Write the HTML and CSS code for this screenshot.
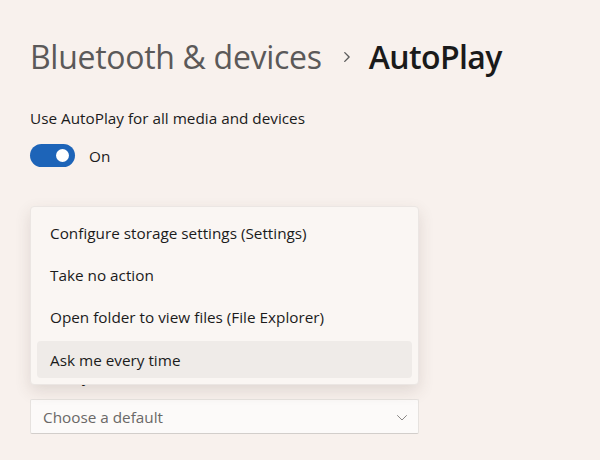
FILE: index.html
```html
<!DOCTYPE html>
<html lang="en">
<head>
    <meta charset="UTF-8">
    <title>AutoPlay</title>
    <link rel="stylesheet" href="styles.css">
</head>
<body>
    <div class="page">
        <h1 class="breadcrumb">
            <span class="crumb-parent">Bluetooth &amp; devices</span>
            <svg class="crumb-sep" viewBox="0 0 10 16" width="9" height="14" aria-hidden="true">
                <path d="M3 3l5 5-5 5" fill="none" stroke="#5c5c5c" stroke-width="1.6" stroke-linecap="round" stroke-linejoin="round"/>
            </svg>
            <span class="crumb-current">AutoPlay</span>
        </h1>

        <div class="setting-label">Use AutoPlay for all media and devices</div>
        <div class="toggle-row">
            <div class="toggle"><div class="knob"></div></div>
            <span class="toggle-text">On</span>
        </div>

        <div class="section">
            <div class="setting-label">Memory card</div>
            <div class="select">
                <span>Choose a default</span>
                <svg class="select-chevron" viewBox="0 0 12 8" width="12" height="8" aria-hidden="true">
                    <path d="M1.5 2.5l4.5 4.5 4.5-4.5" fill="none" stroke="#8a8786" stroke-width="1" stroke-linecap="round" stroke-linejoin="round"/>
                </svg>
            </div>
        </div>

        <div class="menu">
            <div class="menu-item">Configure storage settings (Settings)</div>
            <div class="menu-item">Take no action</div>
            <div class="menu-item">Open folder to view files (File Explorer)</div>
            <div class="menu-item selected">Ask me every time</div>
        </div>
    </div>
</body>
</html>
```

FILE: styles.css
```css
body {
    margin: 0;
    padding: 0;
    background-color: #f8f1ed;
    font-family: 'Open Sans', 'Noto Sans', sans-serif;
    color: #1b1b1b;
}
.page {
    position: relative;
    width: 600px;
    height: 460px;
    padding: 0 0 0 30px;
    box-sizing: border-box;
}
.breadcrumb {
    margin: 0;
    padding-top: 33px;
    height: 46px;
    display: flex;
    align-items: center;
    font-size: 32px;
    font-weight: 400;
    letter-spacing: -0.3px;
}
.crumb-parent {
    color: #5b5959;
}
.crumb-sep {
    margin: 2px 18px 0 20px;
}
.crumb-current {
    color: #1a1a1a;
    font-weight: 600;
    letter-spacing: -0.6px;
}
.setting-label {
    font-size: 15.3px;
    line-height: 20px;
    color: #1b1b1b;
}
.breadcrumb + .setting-label {
    margin-top: 29px;
}
.toggle-row {
    display: flex;
    align-items: center;
    margin-top: 16px;
    height: 23px;
}
.toggle {
    width: 45px;
    height: 23px;
    border-radius: 12px;
    background-color: #1d64b8;
    display: flex;
    align-items: center;
    justify-content: flex-end;
    padding-right: 6px;
    box-sizing: border-box;
}
.knob {
    width: 13px;
    height: 13px;
    border-radius: 50%;
    background-color: #fff;
}
.toggle-text {
    margin-left: 14px;
    font-size: 15.3px;
}
.section {
    margin-top: 199px;
    width: 389px;
}
.section .setting-label {
    margin-bottom: 13px;
}
.select {
    height: 35px;
    box-sizing: border-box;
    background-color: #fcfaf9;
    border: 1px solid #e6e2df;
    border-bottom-color: #d2cecb;
    border-radius: 2px;
    display: flex;
    align-items: center;
    justify-content: space-between;
    padding: 0 10px 0 12px;
    font-size: 15.3px;
    color: #6a6867;
}
.select-chevron {
    margin-top: 1px;
}
.menu {
    position: absolute;
    top: 206px;
    left: 30px;
    width: 389px;
    height: 179px;
    box-sizing: border-box;
    padding: 5px 6px 6px;
    background-color: #faf6f3;
    border: 1px solid #ebe6e3;
    border-radius: 4px;
    box-shadow: 0 6px 16px rgba(80, 60, 50, 0.14);
    display: flex;
    flex-direction: column;
}
.menu-item {
    height: 42px;
    flex-shrink: 0;
    display: flex;
    align-items: center;
    padding-left: 13px;
    font-size: 15.3px;
    color: #1b1b1b;
    border-radius: 4px;
}
.menu-item.selected {
    margin-top: 3px;
    height: 37px;
    background-color: #efebe8;
}
```
